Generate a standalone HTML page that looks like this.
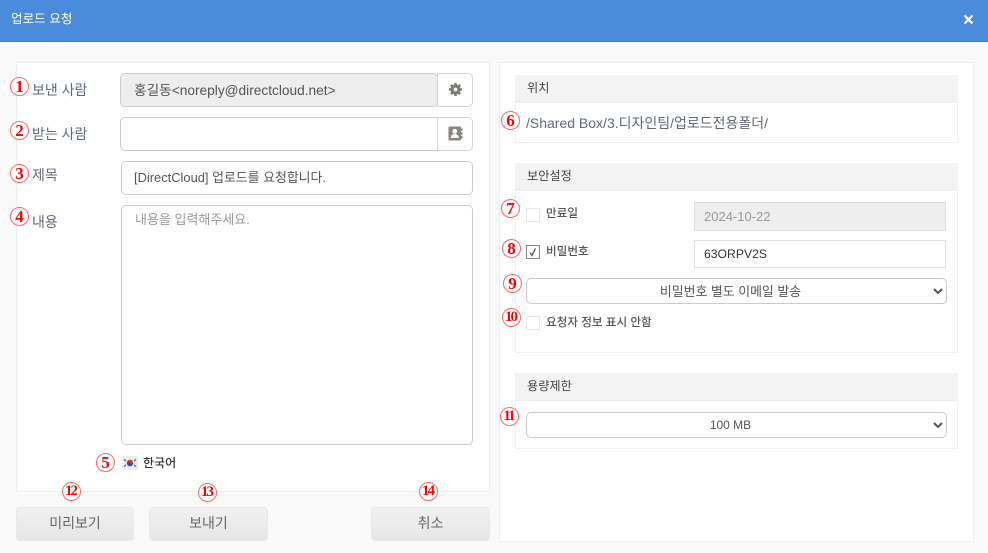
<!DOCTYPE html>
<html lang="ko"><head><meta charset="utf-8"><title>업로드 요청</title>
<style>
*{box-sizing:border-box}
html,body{margin:0;padding:0}
body{width:988px;height:553px;overflow:hidden;position:relative;background:#f9f9f9;font-family:"Liberation Sans","Noto Sans CJK KR",sans-serif;color:#555;font-size:13px}
.a{position:absolute}
.hdr{left:0;top:0;width:988px;height:42px;background:#4a8cdb;border-bottom:1px solid #4583cd;color:#fff;font-size:12.6px;line-height:39px;padding-left:11px}
.panel{background:#fff;border:1px solid #eee}
.lbl{font-size:14px;color:#5f6a76;line-height:20px;white-space:nowrap}
.inp{background:#fff;border:1px solid #ccc;border-radius:5px;color:#555;font-size:13.7px;padding-left:13px;white-space:nowrap}
.sec{left:515px;width:443px;height:28px;background:#f3f3f3;border-bottom:1px solid #eee;font-size:12.2px;color:#444;line-height:27px;padding-left:12px}
.body{left:515px;width:443px;border:1px solid #f0f0f0;border-top:0;background:#fff}
.cb{width:14px;height:14px;border:1px solid #e6e6e6;background:#fff}
.s{font-size:11.6px;color:#555;line-height:16px;white-space:nowrap;font-weight:500}
.btn{height:34px;top:507px;background:linear-gradient(#f1f1f1,#e6e6e6);border:1px solid #e9e9e9;border-radius:4px;font-size:14px;color:#666;text-align:center;line-height:31px}
select{position:absolute;left:526px;width:421px;height:26px;background:#fff;border:1px solid #ccc;border-radius:5px;font:12px "Liberation Sans","Noto Sans CJK KR",sans-serif;color:#555;text-align-last:center;padding:0;outline:0}
.n{position:absolute;width:19px;height:19px;border:1px solid #f66;border-radius:50%;color:#f00;font:bold 17px/17px "Liberation Serif",serif;text-align:center;background:#fff;white-space:nowrap}
.n.t{font-size:15px;letter-spacing:-2px;padding-right:2px}
</style></head><body>
<div class="a hdr">업로드 요청</div>
<svg class="a" style="left:963px;top:14px" width="11" height="11" viewBox="0 0 11 11"><path d="M1.500 1.500 9.500 9.500M9.500 1.500 1.500 9.500" stroke="#fff" stroke-width="2.200"/></svg>

<div class="a panel" style="left:16px;top:62px;width:474px;height:430px"></div>
<div class="a panel" style="left:499px;top:62px;width:475px;height:480px"></div>

<div class="a lbl" style="left:32px;top:80px">보낸 사람</div>
<div class="a lbl" style="left:32px;top:124px">받는 사람</div>
<div class="a lbl" style="left:32px;top:165px">제목</div>
<div class="a lbl" style="left:32px;top:212px">내용</div>

<div class="a inp" style="left:120px;top:73px;width:318px;height:34px;background:#eee;line-height:33px">홍길동&lt;noreply@directcloud.net&gt;</div>
<div class="a inp" style="left:437px;top:73px;width:36px;height:34px;border-radius:0 5px 5px 0;border-color:#d4d4d4"></div>
<svg class="a" style="left:448px;top:82px" width="15" height="15" viewBox="0 0 15 15"><circle cx="7.500" cy="7.500" r="5" fill="#7d7a76"/><path d="M7.500 1v13M1 7.500h13M2.900 2.900l9.200 9.200M12.100 2.900l-9.200 9.200" stroke="#7d7a76" stroke-width="2.600"/><circle cx="7.500" cy="7.500" r="1.900" fill="#fff"/></svg>

<div class="a inp" style="left:120px;top:117px;width:318px;height:34px;border-radius:5px 0 0 5px"></div>
<div class="a inp" style="left:437px;top:117px;width:36px;height:34px;border-radius:0 5px 5px 0;border-color:#d4d4d4"></div>
<svg class="a" style="left:448px;top:126px" width="15" height="15" viewBox="0 0 15 15"><rect x="0.500" y="0.500" width="12.500" height="14" rx="1" fill="#8a8580"/><path d="M13 2.500h1.500v2.500H13zM13 6.200h1.500v2.500H13zM13 10h1.500v2.500H13z" fill="#8a8580"/><circle cx="6.800" cy="5.300" r="2.400" fill="#fff"/><path d="M2.800 12c0-5.500 8-5.500 8 0z" fill="#fff"/></svg>

<div class="a inp" style="left:121px;top:161px;width:352px;height:34px;font-size:12.9px;line-height:32px;padding-left:12px">[DirectCloud] 업로드를 요청합니다.</div>
<div class="a inp" style="left:121px;top:205px;width:352px;height:240px;font-size:13px;line-height:28px;padding-left:13px;color:#999">내용을 입력해주세요.</div>

<svg class="a" style="left:122px;top:456px" width="16" height="14" viewBox="0 0 16 14"><rect width="16" height="14" fill="#eee"/><circle cx="8" cy="7" r="3.200" fill="#d33"/><path d="M4.800 7a3.200 3.200 0 0 0 6.400 0c-1 1.500-2.200.6-3.200 0s-2.200-1.200-3.200 0z" fill="#2a4f9e"/><path d="M2 3.500l2 1.500M2 10.500l2-1.500M14 3.500l-2 1.500M14 10.500l-2-1.500" stroke="#777" stroke-width="1.600"/></svg>
<div class="a s" style="left:143px;top:455px;color:#333;font-size:12px">한국어</div>

<div class="a btn" style="left:16px;width:118px">미리보기</div>
<div class="a btn" style="left:149px;width:119px">보내기</div>
<div class="a btn" style="left:371px;width:119px">취소</div>

<div class="a sec" style="top:75px">위치</div>
<div class="a body" style="top:103px;height:40px"></div>
<div class="a" style="left:526px;top:113px;font-size:14px;line-height:20px;color:#5f6a76;white-space:nowrap">/Shared Box/3.디자인팀/업로드전용폴더/</div>

<div class="a sec" style="top:163px">보안설정</div>
<div class="a body" style="top:191px;height:162px"></div>
<div class="a cb" style="left:526px;top:208px"></div>
<div class="a s" style="left:546px;top:206px">만료일</div>
<div class="a inp" style="left:694px;top:202px;width:252px;height:29px;border-radius:0;background:#eee;line-height:27px;padding-left:9px;color:#999;border-color:#ddd;font-size:13px">2024-10-22</div>
<div class="a cb" style="left:526px;top:245px;border-color:#888"></div>
<svg class="a" style="left:526px;top:245px" width="14" height="14" viewBox="0 0 14 14"><path d="M4 7.500 6 10.500 9.500 3.500" fill="none" stroke="#555" stroke-width="1.300"/></svg>
<div class="a s" style="left:546px;top:244px">비밀번호</div>
<div class="a inp" style="left:694px;top:240px;width:252px;height:28px;border-radius:0;line-height:26px;padding-left:9px;color:#333;border-color:#ddd;font-size:12.2px">63ORPV2S</div>
<select style="top:278px;font-size:12.9px"><option>비밀번호 별도 이메일 발송</option></select>
<div class="a cb" style="left:526px;top:316px"></div>
<div class="a s" style="left:546px;top:315px">요청자 정보 표시 안함</div>

<div class="a sec" style="top:373px">용량제한</div>
<div class="a body" style="top:401px;height:48px"></div>
<select style="top:412px"><option>100 MB</option></select>

<div class="n" style="left:10px;top:77px">1</div>
<div class="n" style="left:10px;top:121px">2</div>
<div class="n" style="left:10px;top:164px">3</div>
<div class="n" style="left:10px;top:207px">4</div>
<div class="n" style="left:96px;top:453px">5</div>
<div class="n" style="left:501px;top:111px">6</div>
<div class="n" style="left:501px;top:199px">7</div>
<div class="n" style="left:502px;top:239px">8</div>
<div class="n" style="left:503px;top:274px">9</div>
<div class="n t" style="left:502px;top:308px">10</div>
<div class="n t" style="left:500px;top:407px">11</div>
<div class="n t" style="left:62px;top:482px">12</div>
<div class="n t" style="left:198px;top:483px">13</div>
<div class="n t" style="left:419px;top:482px">14</div>
</body></html>
